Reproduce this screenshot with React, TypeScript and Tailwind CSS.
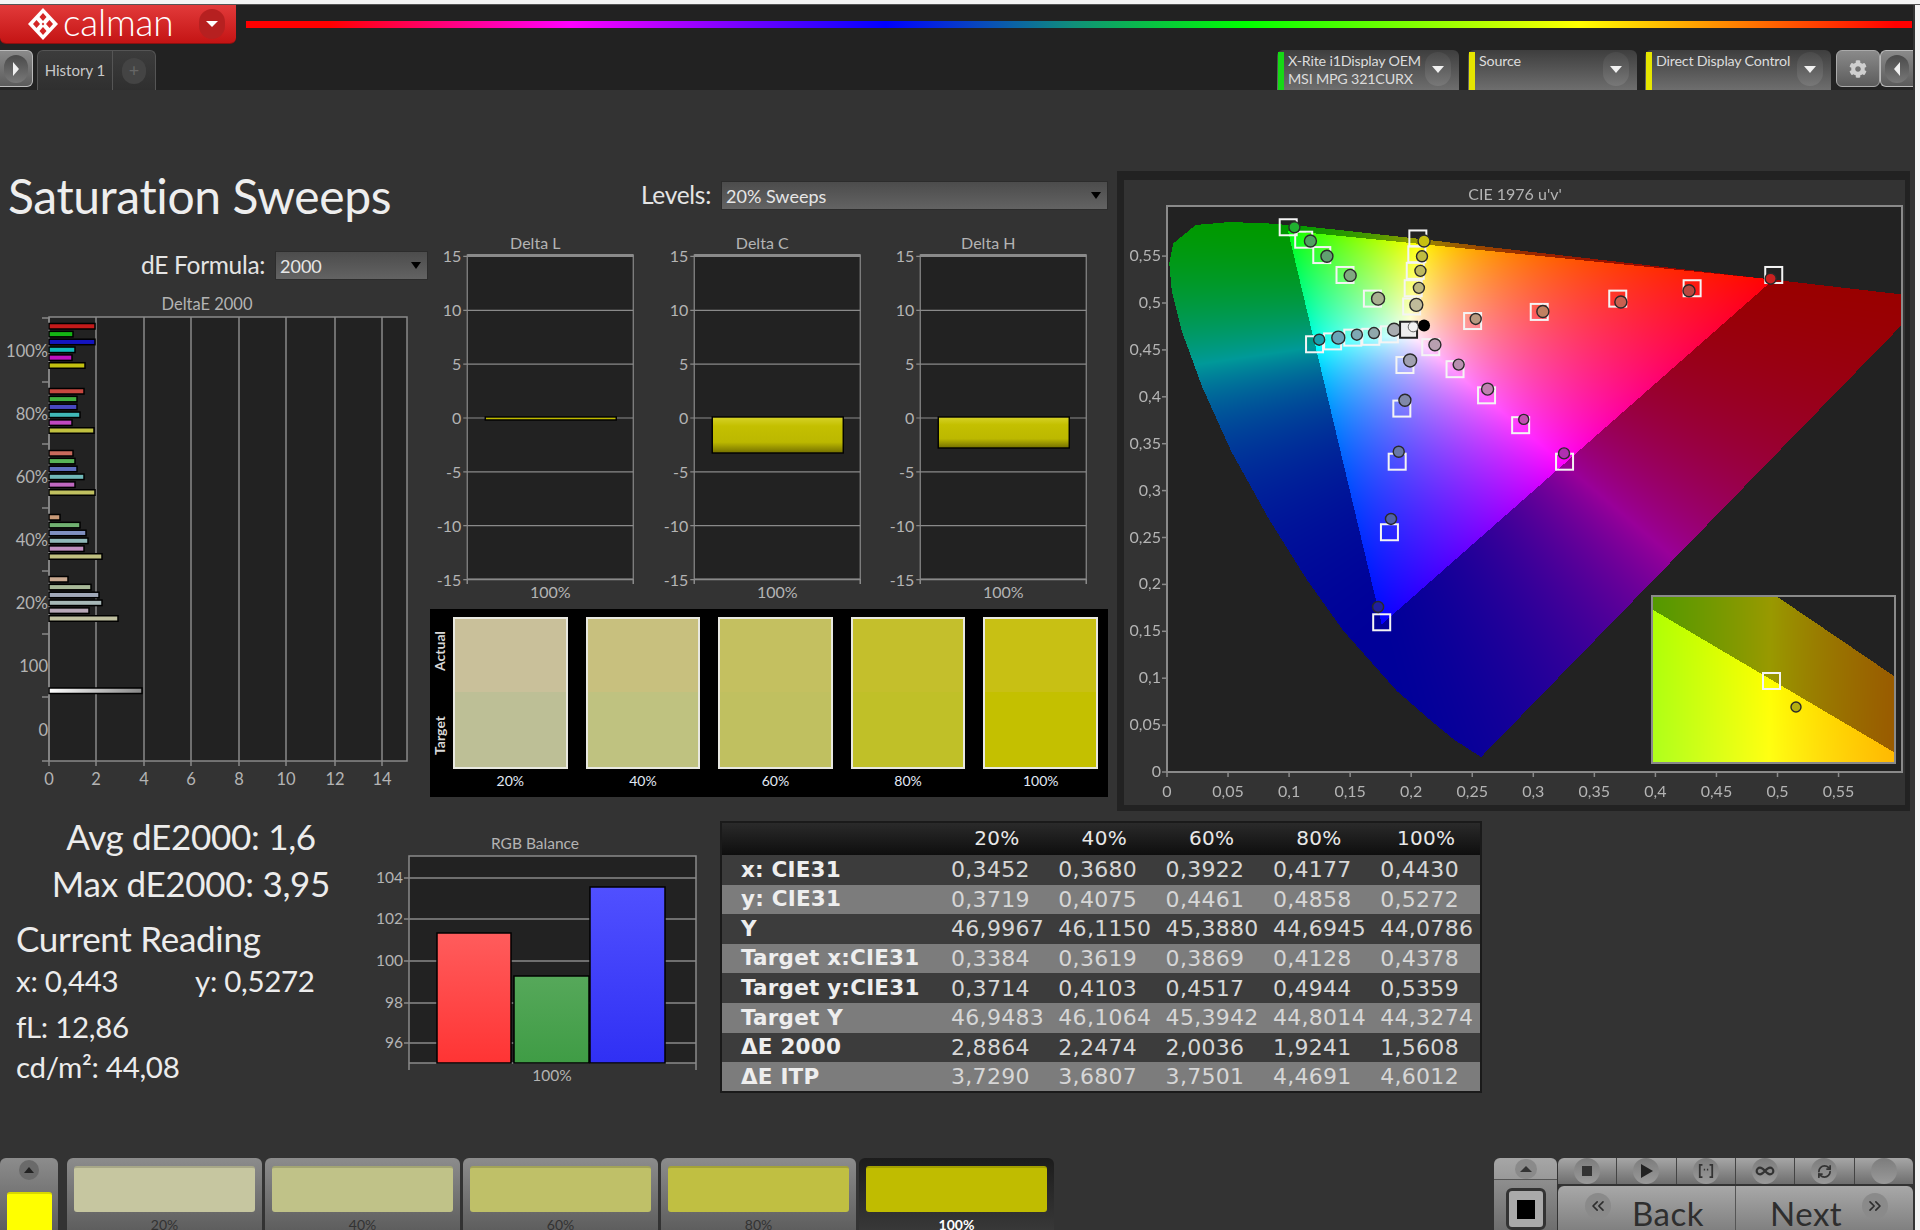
import { useEffect, useRef } from "react";
import { FaCog } from "react-icons/fa";
import { ChevronsLeft, ChevronsRight, Infinity as InfinityIcon, RefreshCw } from "lucide-react";

const axisColor = "#8a8a8a";
const labelColor = "#b4b4b4";

// DeltaE bars per saturation level, width in px, top to bottom
const deltaGroups = [
  { y: 326, widths: [46, 24, 46, 26, 23, 36], colors: ["#c41a1a", "#14b414", "#1414c0", "#12baba", "#c012c0", "#c2c010"] },
  { y: 391, widths: [35, 28, 28, 31, 23, 45], colors: ["#c84840", "#40b040", "#4848c0", "#40b8b8", "#c048c0", "#c0c040"] },
  { y: 453, widths: [24, 26, 28, 35, 26, 46], colors: ["#c86a5c", "#58b458", "#6070c0", "#70b8b8", "#c068c0", "#c0c060"] },
  { y: 517, widths: [11, 31, 37, 39, 35, 53], colors: ["#c89a78", "#70b070", "#8090c0", "#90b8b8", "#c090c0", "#c0c080"] },
  { y: 579, widths: [19, 42, 50, 53, 40, 69], colors: ["#c8a890", "#a8b898", "#a0a8b8", "#a8b8b8", "#b8a8b8", "#c0c0a0"] },
];

const swatches = [
  { label: "20%", actual: "#c9c09a", target: "#bdbf96", strip: "#c6c6a0" },
  { label: "40%", actual: "#c8c07e", target: "#bfc280", strip: "#c0c288" },
  { label: "60%", actual: "#c4c060", target: "#c0c060", strip: "#bfc068" },
  { label: "80%", actual: "#c4bf2c", target: "#c0c028", strip: "#c0bf42" },
  { label: "100%", actual: "#c8c014", target: "#c4c000", strip: "#c0bc00" },
];

const tableRows = [
  ["x: CIE31", "0,3452", "0,3680", "0,3922", "0,4177", "0,4430"],
  ["y: CIE31", "0,3719", "0,4075", "0,4461", "0,4858", "0,5272"],
  ["Y", "46,9967", "46,1150", "45,3880", "44,6945", "44,0786"],
  ["Target x:CIE31", "0,3384", "0,3619", "0,3869", "0,4128", "0,4378"],
  ["Target y:CIE31", "0,3714", "0,4103", "0,4517", "0,4944", "0,5359"],
  ["Target Y", "46,9483", "46,1064", "45,3942", "44,8014", "44,3274"],
  ["ΔE 2000", "2,8864", "2,2474", "2,0036", "1,9241", "1,5608"],
  ["ΔE ITP", "3,7290", "3,6807", "3,7501", "4,4691", "4,6012"],
];

// [square x, square y, dot x, dot y, dot colour, dot radius] in crop units
const markers: [number, number, number, number, string, number][] = [
  [345, 138, 357, 138, "#20b030", 5.5], [375, 168, 388, 171, "#50a060", 6], [410, 205, 420, 208, "#60a070", 6], [455, 253, 465, 254, "#80a880", 6], [508, 310, 519, 310, "#a8b090", 6.5],
  [596, 165, 608, 171, "#c8c010", 6], [594, 203, 604, 208, "#c0bc40", 5.5], [591, 243, 601, 243, "#bcb860", 5.5], [587, 285, 598, 284, "#bcb880", 5.5], [584, 329, 593, 325, "#c0bc9a", 6.5],
  [396, 420, 405, 409, "#1aa0ac", 5.5], [431, 413, 442, 404, "#6aa4b8", 6.5], [470, 404, 478, 397, "#7ea8b4", 5.5], [505, 402, 511, 393, "#90a8ac", 5.5], [541, 396, 550, 385, "#a8acb0", 6.5],
  [1285, 253, 1279, 262, "#c82020", 5.5], [1127, 285, 1121, 291, "#b84840", 6], [983, 310, 989, 318, "#c86050", 6], [831, 342, 838, 341, "#c08060", 6], [702, 364, 708, 359, "#b89a80", 5.5],
  [880, 703, 879, 683, "#b030b0", 5.5], [795, 615, 801, 601, "#c050b0", 5], [729, 543, 731, 528, "#c080b0", 6], [668, 480, 675, 469, "#b890b0", 5.5], [621, 427, 629, 421, "#b8a0b0", 6],
  [526, 1090, 519, 1053, "#2020a0", 5.5], [541, 873, 544, 841, "#5060a8", 5.5], [556, 703, 559, 679, "#6878a8", 5.5], [565, 575, 571, 555, "#8088a8", 6], [571, 470, 581, 459, "#a0a0b0", 6.5],
];

const cropX = (z: number) => 1110 + z / 1.936;
const cropY = (z: number) => 170 + z / 2.41;

const locus: [number, number][] = [
  [0.2568, 0.0165], [0.2347, 0.035], [0.2161, 0.0549], [0.1877, 0.0871], [0.1441, 0.151], [0.1147, 0.2044], [0.0828, 0.2708], [0.0521, 0.3427],
  [0.0282, 0.4117], [0.0119, 0.4699], [0.0035, 0.5131], [0.0014, 0.5431], [0.0046, 0.5639], [0.0231, 0.5837], [0.05, 0.5868], [0.0792, 0.5857],
  [0.1127, 0.5823], [0.1531, 0.5766], [0.2026, 0.5694], [0.2623, 0.5604], [0.3315, 0.5501], [0.4035, 0.5393], [0.5202, 0.5218], [0.6233, 0.5064],
];

const inLocus = (u: number, v: number) => {
  let hit = false;
  for (let i = 0, j = locus.length - 1; i < locus.length; j = i++) {
    const [ui, vi] = locus[i];
    const [uj, vj] = locus[j];
    if (vi > v !== vj > v && u < ((uj - ui) * (v - vi)) / (vj - vi) + ui) hit = !hit;
  }
  return hit;
};

// colour of a u'v' point: P3 gamut bright, everything outside it dimmed
const chroma = (u: number, v: number) => {
  const d = 6 * u - 16 * v + 12;
  const x = (9 * u) / d;
  const y = (4 * v) / d;
  const X = x / y;
  const Z = (1 - x - y) / y;
  const lin = [
    2.4934969 * X - 0.9313836 - 0.4027108 * Z,
    -0.829489 * X + 1.7626641 + 0.0236247 * Z,
    0.0358458 * X - 0.0761724 + 0.9568845 * Z,
  ];
  const inside = Math.min(...lin) >= 0;
  const c = lin.map((n) => Math.max(n, 0));
  const top = Math.max(...c);
  return c.map((n) => (inside ? Math.pow(n / top, 1 / 1.25) * 255 : Math.pow(n / top, 1.3) * 153));
};

const Gamut = () => {
  const ref = useRef<HTMLCanvasElement>(null);

  useEffect(() => {
    const ctx = ref.current?.getContext("2d");
    if (!ctx) return;
    const w = 735;
    const h = 566;
    const img = ctx.createImageData(w, h);
    for (let py = 0; py < h; py++) {
      for (let px = 0; px < w; px++) {
        const zoomed = px >= 485 && px < 728 && py >= 390 && py < 557;
        const u = zoomed ? 0.2051 + (px - 485 - 119) / 3640 : px / 1221;
        const v = zoomed ? 0.5638 - (py - 390 - 82) / 16400 : (566 - py) / 938;
        const rgb = inLocus(u, v) ? chroma(u, v) : [34, 34, 34];
        const i = (py * w + px) * 4;
        img.data[i] = rgb[0];
        img.data[i + 1] = rgb[1];
        img.data[i + 2] = rgb[2];
        img.data[i + 3] = 255;
      }
    }
    ctx.putImageData(img, 0, 0);
  }, []);

  return <canvas ref={ref} width={735} height={566} className="block" />;
};

const CiePanel = () => {
  const uTicks = ["0", "0,05", "0,1", "0,15", "0,2", "0,25", "0,3", "0,35", "0,4", "0,45", "0,5", "0,55"];
  const vTicks = ["0", "0,05", "0,1", "0,15", "0,2", "0,25", "0,3", "0,35", "0,4", "0,45", "0,5", "0,55"];

  return (
    <div className="w-[793px] h-[640px] mt-[81px] ml-[7px] bg-[#222] pl-[7px] pr-[5px] pt-[9px] pb-[6px]">
      <div className="relative h-[625px] bg-[#333] pl-[43px] pt-[26px]">
        <Gamut />
        <svg viewBox="1124 180 781 625" className="absolute inset-0 w-full h-full" fontSize={16} fill={labelColor}>
          <text x={1515} y={200} textAnchor="middle">CIE 1976 u'v'</text>
          <rect x={1167} y={206} width={735} height={566} fill="none" stroke={axisColor} strokeWidth={2} />
          {uTicks.map((t, i) => (
            <g key={t}>
              <line x1={1167 + i * 61.05} x2={1167 + i * 61.05} y1={772} y2={777} stroke={axisColor} strokeWidth={1.5} />
              <text x={1167 + i * 61.05} y={797} textAnchor="middle">{t}</text>
            </g>
          ))}
          {vTicks.map((t, i) => (
            <g key={t}>
              <line x1={1162} x2={1167} y1={772 - i * 46.9} y2={772 - i * 46.9} stroke={axisColor} strokeWidth={1.5} />
              <text x={1161} y={777 - i * 46.9} textAnchor="end">{t}</text>
            </g>
          ))}
          <rect x={1652} y={596} width={243} height={167} fill="none" stroke={axisColor} strokeWidth={2} />
          {markers.map((m, i) => (
            <rect key={i} x={cropX(m[0]) - 8.5} y={cropY(m[1]) - 8} width={17} height={16} fill="none" stroke="#f4f4f4" strokeWidth={2} />
          ))}
          {markers.map((m, i) => (
            <circle key={i} cx={cropX(m[2])} cy={cropY(m[3])} r={m[5]} fill={m[4]} stroke="#2a2a2a" strokeWidth={1.4} />
          ))}
          <rect x={cropX(578) - 8.5} y={cropY(385) - 8} width={17} height={16} fill="#eeeeee" stroke="#222" strokeWidth={2} />
          <circle cx={cropX(587)} cy={cropY(378)} r={5} fill="#f2f2f2" stroke="#666" />
          <circle cx={cropX(608)} cy={cropY(375)} r={6} fill="#000" />
          <rect x={1763} y={673} width={17} height={16} fill="none" stroke="#f4f4f4" strokeWidth={2} />
          <circle cx={1796} cy={707} r={5} fill="#b4ae10" stroke="#2a2a2a" strokeWidth={1.4} />
        </svg>
      </div>
    </div>
  );
};

const DeltaE2000Chart = () => {
  const xTicks = [49, 96, 144, 191, 239, 286, 335, 382];
  const yTicks = [318, 382, 444, 508, 571, 634, 697, 761];
  const yLabels = [
    ["100%", 357], ["80%", 420], ["60%", 483], ["40%", 546], ["20%", 609], ["100", 672], ["0", 736],
  ] as const;

  return (
    <svg viewBox="0 290 430 510" className="block w-[430px] h-[510px] mt-[10px]" fontSize={16.5} fill={labelColor}>
      <rect x={49} y={317} width={358} height={444} fill="#222" stroke={axisColor} strokeWidth={1.5} />
      <text x={207} y={310} textAnchor="middle">DeltaE 2000</text>
      {xTicks.map((x, i) => (
        <g key={x}>
          <line x1={x} x2={x} y1={317} y2={766} stroke={axisColor} strokeWidth={1.5} />
          <text x={x} y={785} textAnchor="middle">{i * 2}</text>
        </g>
      ))}
      {yTicks.map((y) => (
        <line key={y} x1={42} x2={49} y1={y} y2={y} stroke={axisColor} strokeWidth={1.5} />
      ))}
      {yLabels.map(([t, y]) => (
        <text key={t} x={48} y={y} textAnchor="end">{t}</text>
      ))}
      {deltaGroups.map((g) =>
        g.widths.map((w, i) => (
          <rect key={g.y + i} x={49} y={g.y + i * 7.85 - 2.5} width={w} height={5.5} fill={g.colors[i]} stroke="#000" strokeWidth={1.5} />
        )),
      )}
      <defs>
        <linearGradient id="maxBar" x1="0" x2="1" y1="0" y2="0">
          <stop offset="0" stopColor="#fff" />
          <stop offset="1" stopColor="#888" />
        </linearGradient>
      </defs>
      <rect x={49} y={688} width={93} height={5.5} fill="url(#maxBar)" stroke="#000" strokeWidth={1.5} />
    </svg>
  );
};

const DeltaChart = ({ title, bar, id }: { title: string; bar: number; id: string }) => {
  const ticks = [15, 10, 5, 0, -5, -10, -15];
  const yOf = (v: number) => 183 - v * 10.77;

  return (
    <svg viewBox="0 -6 226 376" className="block w-[226.5px] h-[376px] shrink-0" fontSize={16} fill={labelColor}>
      <defs>
        <linearGradient id={id} x1="0" x2="0" y1="0" y2="1">
          <stop offset="0" stopColor="#d6d228" />
          <stop offset="0.25" stopColor="#c4c000" />
          <stop offset="0.7" stopColor="#bcb800" />
          <stop offset="1" stopColor="#736f00" />
        </linearGradient>
      </defs>
      <rect x={32} y={20} width={166} height={324} fill="#222" stroke={axisColor} strokeWidth={1.2} />
      <line x1={32} x2={198} y1={20.5} y2={20.5} stroke={axisColor} strokeWidth={3} />
      <text x={100} y={14} textAnchor="middle">{title}</text>
      {ticks.map((t) => (
        <g key={t}>
          <line x1={28} x2={198} y1={yOf(t)} y2={yOf(t)} stroke={axisColor} strokeWidth={1.2} />
          <text x={26} y={yOf(t) + 6} textAnchor="end">{t}</text>
        </g>
      ))}
      <line x1={32} x2={32} y1={344} y2={349} stroke={axisColor} strokeWidth={1.5} />
      <line x1={198} x2={198} y1={344} y2={349} stroke={axisColor} strokeWidth={1.5} />
      <rect x={50} y={182} width={131} height={bar} fill={`url(#${id})`} stroke="#000" strokeWidth={1.4} />
      <text x={115} y={363} textAnchor="middle">100%</text>
    </svg>
  );
};

const RgbBalance = () => {
  const ticks = [
    ["104", 878], ["102", 919], ["100", 961], ["98", 1003], ["96", 1043],
  ] as const;

  return (
    <svg viewBox="360 830 350 260" className="block w-[350px] h-[260px] mt-[19px] shrink-0" fontSize={15.5} fill={labelColor}>
      <defs>
        <linearGradient id="redBar" x1="0" x2="0" y1="0" y2="1">
          <stop offset="0" stopColor="#ff5c5c" />
          <stop offset="1" stopColor="#ff3434" />
        </linearGradient>
        <linearGradient id="greenBar" x1="0" x2="0" y1="0" y2="1">
          <stop offset="0" stopColor="#56a85a" />
          <stop offset="1" stopColor="#3f9c45" />
        </linearGradient>
        <linearGradient id="blueBar" x1="0" x2="0" y1="0" y2="1">
          <stop offset="0" stopColor="#5050ff" />
          <stop offset="1" stopColor="#3030f4" />
        </linearGradient>
      </defs>
      <rect x={409} y={856} width={287} height={207} fill="#222" />
      <text x={535} y={849} textAnchor="middle">RGB Balance</text>
      <path d="M409 1070V856H696V1070M409 1063H696" fill="none" stroke={axisColor} strokeWidth={1.5} />
      {ticks.map(([t, y]) => (
        <g key={t}>
          <line x1={404} x2={696} y1={y} y2={y} stroke={axisColor} strokeWidth={1.3} />
          <text x={403} y={y + 5} textAnchor="end">{t}</text>
        </g>
      ))}
      <rect x={437} y={933} width={74} height={130} fill="url(#redBar)" stroke="#000" strokeWidth={1.5} />
      <rect x={514} y={976} width={75} height={87} fill="url(#greenBar)" stroke="#000" strokeWidth={1.5} />
      <rect x={590} y={887} width={75} height={176} fill="url(#blueBar)" stroke="#000" strokeWidth={1.5} />
      <text x={552} y={1081} textAnchor="middle">100%</text>
    </svg>
  );
};

const Select = ({ value, className }: { value: string; className: string }) => (
  <div className={`flex items-center justify-between h-[29px] pl-[4px] pr-[6px] bg-[linear-gradient(#4c4c4c,#636363)] border border-[#2c2c2c] text-[18px] text-[#e6e6e6] ${className}`}>
    <span className="pt-[2px]">{value}</span>
    <span className="w-0 h-0 border-x-[5px] border-x-transparent border-t-[7px] border-t-black" />
  </div>
);

const RoundArrow = ({ className, dir }: { className: string; dir: "left" | "right" | "down" }) => (
  <span className={`flex items-center justify-center rounded-full bg-[linear-gradient(#4a4a4a,#787878)] ${className}`}>
    {dir === "down" && <span className="w-0 h-0 border-x-[6px] border-x-transparent border-t-[7px] border-t-[#f0f0f0]" />}
    {dir === "left" && <span className="w-0 h-0 border-y-[7px] border-y-transparent border-r-[6px] border-r-[#f0f0f0]" />}
    {dir === "right" && <span className="w-0 h-0 border-y-[7px] border-y-transparent border-l-[6px] border-l-[#f0f0f0]" />}
  </span>
);

const SourceBox = ({ stripe, lines, className }: { stripe: string; lines: string[]; className: string }) => (
  <div className={`flex h-[40px] pt-[2px] rounded-t-md bg-[linear-gradient(#3e3e3e,#6e6e6e)] ${className}`}>
    <span className={`w-[6px] ml-[1px] shrink-0 ${stripe}`} />
    <div className="flex-1 pl-[4px] text-[14.3px] leading-[18px] text-[#dcdcdc] tracking-[-0.2px] whitespace-nowrap">
      {lines.map((l) => (
        <div key={l}>{l}</div>
      ))}
    </div>
    <RoundArrow dir="down" className="w-[26px] h-[34px] mr-[8px] shrink-0" />
  </div>
);

const Logo = () => (
  <div className="flex items-center w-[236px] h-[39px] rounded-b-md bg-[linear-gradient(#e23a3a,#c41414)] border-b border-[#8a1010]">
    <svg viewBox="0 0 30 32" className="w-[30px] h-[32px] ml-[28px] shrink-0">
      <path d="M15 0 30 16 15 32 0 16Z" fill="#fff" />
      <path d="M15 5 18.500 9 15 13 11.500 9ZM15 19 18.500 23 15 27 11.500 23ZM8.500 12 12 16 8.500 20 5 16ZM21.500 12 25 16 21.500 20 18 16Z" fill="#d42626" />
      <path d="M15 14.500 16.300 16 15 17.500 13.700 16Z" fill="#d42626" />
    </svg>
    <span className="ml-[5px] mb-[4px] text-[37px] leading-[30px] font-light text-white tracking-[-0.2px]">calman</span>
    <span className="ml-[26px] flex items-center justify-center w-[26px] h-[30px] rounded-full bg-[#b62020]">
      <span className="w-0 h-0 border-x-[6px] border-x-transparent border-t-[6px] border-t-white" />
    </span>
  </div>
);

const Header = () => (
  <div className="h-[85px] bg-[#222] shrink-0">
    <div className="flex h-[45px]">
      <Logo />
      <div className="ml-[10px] mt-[16px] w-[1666px] h-[7px] bg-[linear-gradient(90deg,#f00_5%,#f0f_19.5%,#00f_38.4%,#10907a_49.7%,#0f0_60%,#ff0_80%,#f00_99%)]" />
    </div>
    <div className="flex h-[40px] items-start">
      <div className="flex items-center justify-center w-[33px] h-[37px] rounded-r-md border border-l-0 border-[#bbb] bg-[linear-gradient(#8a8a8a,#5c5c5c)]">
        <RoundArrow dir="right" className="w-[24px] h-[28px]" />
      </div>
      <div className="flex ml-[4px] w-[119px] h-[40px] rounded-t-md bg-[linear-gradient(#3c3c3c,#2f2f2f)] border border-b-0 border-[#555] text-[15px] text-[#c8c8c8]">
        <span className="flex items-center justify-center w-[75px] border-r border-[#555] whitespace-nowrap">History 1</span>
        <span className="flex flex-1 items-center justify-center">
          <span className="flex items-center justify-center w-[24px] h-[26px] rounded-full bg-[#444] text-[#666] text-[18px]">+</span>
        </span>
      </div>
      <div className="flex-1" />
      <SourceBox stripe="bg-[#16d816]" lines={["X-Rite i1Display OEM", "MSI MPG 321CURX"]} className="w-[182px]" />
      <SourceBox stripe="bg-[#e6e600]" lines={["Source"]} className="w-[169px] ml-[9px]" />
      <SourceBox stripe="bg-[#e6e600]" lines={["Direct Display Control"]} className="w-[186px] ml-[8px]" />
      <div className="flex items-center justify-center w-[44px] h-[37px] ml-[5px] rounded-md border border-[#aaa] bg-[linear-gradient(#8a8a8a,#5c5c5c)]">
        <FaCog className="w-[18px] h-[18px] text-[#cfcfcf]" />
      </div>
      <div className="flex items-center justify-center w-[33px] h-[37px] rounded-l-md border border-r-0 border-[#bbb] bg-[linear-gradient(#8a8a8a,#5c5c5c)]">
        <RoundArrow dir="left" className="w-[24px] h-[28px]" />
      </div>
    </div>
  </div>
);

const LeftColumn = () => (
  <div className="w-[430px] shrink-0">
    <h1 className="pl-[8px] pt-[78px] h-[134px] text-[48px] leading-[56px] font-normal text-[#eeeeee] tracking-[-0.4px] whitespace-nowrap">Saturation Sweeps</h1>
    <div className="flex items-center h-[29px] mt-[27px]">
      <span className="ml-[141px] w-[134px] text-[24.5px] text-[#e4e4e4] tracking-[-0.3px] whitespace-nowrap">dE Formula:</span>
      <Select value="2000" className="w-[153px]" />
    </div>
    <DeltaE2000Chart />
  </div>
);

const MiddleColumn = () => (
  <div className="w-[680px] shrink-0">
    <div className="flex items-center justify-end h-[29px] mt-[91px] pr-[2px]">
      <span className="mr-[10px] text-[24.5px] text-[#e4e4e4] tracking-[-0.3px]">Levels:</span>
      <Select value="20% Sweeps" className="w-[387px]" />
    </div>
    <div className="flex ml-[5px] mt-[19px]">
      <DeltaChart title="Delta L" bar={3} id="barL" />
      <DeltaChart title="Delta C" bar={36} id="barC" />
      <DeltaChart title="Delta H" bar={31} id="barH" />
    </div>
    <div className="flex h-[188px] w-[678px] mt-[4px] bg-black pt-[8px]">
      <div className="flex flex-col justify-between w-[23px] h-[152px] items-center py-[14px] pr-[4px] text-[14px] font-bold text-[#d8d8d8]">
        <span className="[writing-mode:vertical-rl] rotate-180">Actual</span>
        <span className="[writing-mode:vertical-rl] rotate-180">Target</span>
      </div>
      <div className="grid grid-cols-5 gap-x-[18px] w-[645px]">
        {swatches.map((s) => (
          <div key={s.label} className="flex flex-col items-center">
            <div className="w-full h-[152px] border-2 border-[#e8e8e0] bg-[#222] flex flex-col">
              <div className="h-[73px]" style={{ background: s.actual }} />
              <div className="flex-1" style={{ background: s.target }} />
            </div>
            <span className="mt-[4px] text-[14px] leading-[16px] text-[#e2e8f4]">{s.label}</span>
          </div>
        ))}
      </div>
    </div>
  </div>
);

const Stats = () => (
  <div className="w-[360px] shrink-0 text-[#ececec] text-[35px] leading-[47px] tracking-[-0.3px] whitespace-nowrap">
    <div className="w-[382px] text-center mt-[2px]">Avg dE2000: 1,6</div>
    <div className="w-[382px] text-center">Max dE2000: 3,95</div>
    <div className="pl-[16px] mt-[8px]">Current Reading</div>
    <div className="flex pl-[16px] h-[38px] leading-[38px] text-[29.5px]">
      <span className="w-[179px]">x: 0,443</span>
      <span>y: 0,5272</span>
    </div>
    <div className="pl-[16px] mt-[7px] h-[40px] leading-[40px] text-[29.5px]">fL: 12,86</div>
    <div className="pl-[16px] h-[40px] leading-[40px] text-[29.5px]">cd/m²: 44,08</div>
  </div>
);

const ReadingsTable = () => (
  <div className="w-[762px] h-[272px] ml-[10px] mt-[10px] border-2 border-[#1a1a1a] font-['DejaVu_Sans',sans-serif] text-[22px] text-[#d6d6d6] tracking-[0.3px] overflow-hidden">
    <div className="flex h-[32px] pl-[229px] pb-[3px] items-center bg-[linear-gradient(#2a2a2a,#0e0e0e)] text-[#e8e8e8] text-[20px]">
      {["20%", "40%", "60%", "80%", "100%"].map((h) => (
        <span key={h} className="w-[107.3px] shrink-0"><span className="block w-[92px] text-center">{h}</span></span>
      ))}
    </div>
    {tableRows.map((row, i) => (
      <div key={row[0]} className={`flex h-[29.6px] items-center ${i % 2 ? "bg-[#7c7c7c]" : "bg-[#3c3c3c]"}`}>
        <span className="w-[229px] shrink-0 pl-[19px] font-bold text-[21.5px] tracking-[0.2px] text-[#eeeeee] whitespace-nowrap">{row[0]}</span>
        {row.slice(1).map((v, c) => (
          <span key={c} className="w-[107.3px] shrink-0 whitespace-nowrap">{v}</span>
        ))}
      </div>
    ))}
  </div>
);

const CtrlIcon = ({ children, divider = true }: { children?: React.ReactNode; divider?: boolean }) => (
  <div className={`flex flex-1 items-center justify-center ${divider ? "border-r border-[#444]" : ""}`}>
    <span className="flex items-center justify-center w-[26px] h-[26px] rounded-full bg-[linear-gradient(#7c7c7c,#9a9a9a)] text-[#333]">{children}</span>
  </div>
);

const BottomStrip = () => (
  <div className="flex h-[72px] shrink-0 overflow-hidden">
    <div className="w-[58px] shrink-0 rounded-t-md bg-[linear-gradient(#8c8c8c,#5e5e5e)] flex flex-col items-center">
      <span className="mt-[2px] flex items-center justify-center w-[20px] h-[20px] rounded-full bg-[#6a6a6a]">
        <span className="w-0 h-0 border-x-[5px] border-x-transparent border-b-[6px] border-b-[#222]" />
      </span>
      <div className="w-[45px] h-[38px] mt-[12px] rounded-t-[3px] bg-[#ffff00] border-t-2 border-[#d8d800]" />
    </div>
    <div className="flex ml-[9px] gap-[3px]">
      {swatches.map((s) => {
        const active = s.label === "100%";
        return (
          <div key={s.label} className={`w-[195px] flex flex-col items-center rounded-t-md pt-[8px] px-[7px] ${active ? "bg-[linear-gradient(#1c1c1c,#383838)]" : "bg-[linear-gradient(#8c8c8c,#5e5e5e)]"}`}>
            <div className="w-full h-[46px] shrink-0 rounded-[3px] border-t-2 border-black/15" style={{ background: s.strip }} />
            <span className={`mt-[5px] text-[14px] leading-[16px] ${active ? "text-white font-bold" : "text-[#333]"}`}>{s.label}</span>
          </div>
        );
      })}
    </div>
    <div className="flex-1" />
    <div className="w-[63px] shrink-0 flex flex-col rounded-t-md bg-[linear-gradient(#a6a6a6,#7a7a7a)]">
      <div className="flex h-[24px] items-center justify-center border-b border-[#555]">
        <span className="flex items-center justify-center w-[22px] h-[20px] rounded-full bg-[#8a8a8a]">
          <span className="w-0 h-0 border-x-[6px] border-x-transparent border-b-[6px] border-b-[#333]" />
        </span>
      </div>
      <div className="flex justify-center pt-[8px] bg-[linear-gradient(#8e8e8e,#6e6e6e)] flex-1">
        <span className="flex items-center justify-center w-[40px] h-[42px] rounded-[6px] border-[3px] border-[#333] bg-[#aaa] shrink-0">
          <span className="w-[18px] h-[19px] bg-black" />
        </span>
      </div>
    </div>
    <div className="w-[355px] shrink-0 ml-[1px] flex flex-col">
      <div className="flex h-[39px] rounded-t-md bg-[linear-gradient(#a6a6a6,#6e6e6e)]">
        <CtrlIcon><span className="w-[10px] h-[10px] bg-[#333]" /></CtrlIcon>
        <CtrlIcon><span className="w-0 h-0 ml-[2px] border-y-[7px] border-y-transparent border-l-[12px] border-l-[#222]" /></CtrlIcon>
        <CtrlIcon>
          <svg viewBox="0 0 18 18" className="w-[16px] h-[16px]" fill="none" stroke="#333" strokeWidth={2}>
            <path d="M5 2H2V16H5M13 2H16V16H13" />
            <path d="M6.500 7.500H8M10 7.500H11.500" />
          </svg>
        </CtrlIcon>
        <CtrlIcon><InfinityIcon size={20} strokeWidth={2.6} /></CtrlIcon>
        <CtrlIcon><RefreshCw size={15} strokeWidth={2.8} /></CtrlIcon>
        <CtrlIcon divider={false} />
      </div>
      <div className="flex flex-1 mt-[2px] text-[#2e2e2e]">
        <div className="flex flex-1 rounded-tl-md bg-[linear-gradient(#a8a8a8,#808080)] border-r border-[#555]">
          <span className="flex items-center justify-center w-[26px] h-[26px] ml-[27px] mt-[7px] rounded-full bg-[#8a8a8a] shrink-0"><ChevronsLeft size={20} /></span>
          <span className="ml-[21px] pt-[10px] text-[33px] leading-[34px] tracking-[0.5px]">Back</span>
        </div>
        <div className="flex flex-1 rounded-tr-md bg-[linear-gradient(#a8a8a8,#808080)]">
          <span className="ml-[34px] pt-[10px] text-[33px] leading-[34px] tracking-[0.5px]">Next</span>
          <span className="flex items-center justify-center w-[26px] h-[26px] ml-[20px] mt-[7px] rounded-full bg-[#8a8a8a] shrink-0"><ChevronsRight size={20} /></span>
        </div>
      </div>
    </div>
  </div>
);

export default function App() {
  return (
    <div className="flex flex-col w-[1920px] h-[1230px] overflow-hidden font-['Lato',sans-serif] bg-[#f4f4f4]">
      <div className="h-[5px] shrink-0 border-b border-[#555]" />
      <div className="flex flex-1 min-h-0">
        <div className="flex flex-col w-[1913px] shrink-0 bg-[#333]">
          <Header />
          <div className="flex-1 min-h-0 flex flex-col">
            <div className="flex h-[721px] shrink-0">
              <LeftColumn />
              <MiddleColumn />
              <CiePanel />
            </div>
            <div className="flex flex-1 min-h-0">
              <Stats />
              <RgbBalance />
              <ReadingsTable />
            </div>
          </div>
          <BottomStrip />
        </div>
        <div className="w-[2px] shrink-0 bg-[#333]" />
      </div>
    </div>
  );
}
